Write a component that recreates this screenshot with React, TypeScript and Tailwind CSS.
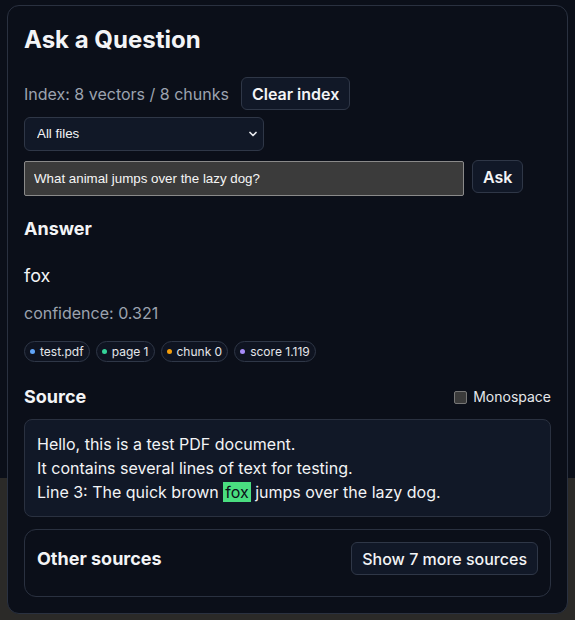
import { ChevronDown } from 'lucide-react';

const chips = [
  { label: 'test.pdf', dot: 'bg-[#60a5fa]' },
  { label: 'page 1', dot: 'bg-[#34d399]' },
  { label: 'chunk 0', dot: 'bg-[#f59e0b]' },
  { label: 'score 1.119', dot: 'bg-[#a78bfa]' },
];

export default function App() {
  return (
    <div className="min-h-screen bg-[linear-gradient(#0b0f19_478px,#2b2a28_478px)] pl-[7px] pt-[5px] font-['Inter',sans-serif] text-[#e5e7eb]">
      <div className="w-[561px] rounded-xl border border-[#2a3140] bg-[#0b0f19] p-4">
        <h1 className="pt-[2px] text-2xl font-bold leading-8 text-[#f3f4f6]">Ask a Question</h1>

        {/* index status */}
        <div className="mt-[21px] flex items-center gap-3">
          <span className="text-base text-[#9ca3af]">Index: 8 vectors / 8 chunks</span>
          <button className="h-[33px] rounded-md border border-[#2f3747] bg-[#111827] px-[10px] text-base font-semibold text-[#f3f4f6]">
            Clear index
          </button>
        </div>

        <div className="relative mt-[7px] w-[240px]">
          <select className="h-[34px] w-full appearance-none rounded-md border border-[#2f3747] bg-[#111827] pl-3 font-['Liberation_Sans',Arial,sans-serif] text-[13.33px] text-[#f3f4f6]">
            <option>All files</option>
          </select>
          <ChevronDown className="pointer-events-none absolute right-[5px] top-[11px] h-3 w-3 text-[#e5e7eb]" strokeWidth={3.5} />
        </div>

        <div className="mt-[10px] flex items-start gap-2">
          <input
            className="h-[35px] w-[440px] rounded-[2px] border border-[#8a8a8a] bg-[#3b3b3b] px-[9px] font-['Liberation_Sans',Arial,sans-serif] text-[13.33px] text-[#f5f5f5] outline-none"
            defaultValue="What animal jumps over the lazy dog?"
          />
          <button className="mt-[-1px] h-[33px] rounded-md border border-[#2f3747] bg-[#111827] px-[10px] text-base font-semibold text-[#f3f4f6]">
            Ask
          </button>
        </div>

        {/* answer */}
        <h2 className="mt-[19px] text-lg font-bold leading-7 text-[#f3f4f6]">Answer</h2>
        <p className="mt-[19px] text-lg leading-7 text-[#f3f4f6]">fox</p>
        <p className="mt-[11px] text-base text-[#9ca3af]">confidence: 0.321</p>
        <div className="mt-[16px] flex gap-[6px]">
          {chips.map((c) => (
            <span
              key={c.label}
              className="flex h-[21px] items-center gap-[5px] rounded-full border border-[#2f3747] bg-[#0f1421] px-[5px] text-xs text-[#e5e7eb]"
            >
              <span className={`h-[5px] w-[5px] rounded-full ${c.dot}`} />
              {c.label}
            </span>
          ))}
        </div>

        {/* source */}
        <div className="mt-[21px] flex items-center justify-between">
          <h2 className="text-lg font-bold leading-7 text-[#f3f4f6]">Source</h2>
          <label className="flex items-center gap-[6px] text-sm text-[#e5e7eb]">
            <span className="h-[13px] w-[13px] rounded-[2px] border border-[#767676] bg-[#3b3b3b]" />
            Monospace
          </label>
        </div>
        <div className="mt-[8px] rounded-lg border border-[#2a3140] bg-[#111827] p-3 text-base leading-6 text-[#f3f4f6]">
          <p>Hello, this is a test PDF document.</p>
          <p>It contains several lines of text for testing.</p>
          <p>
            Line 3: The quick brown <mark className="bg-[#4ade80] px-[2px] text-[#0b0f19]">fox</mark> jumps over the lazy dog.
          </p>
        </div>

        <div className="mt-3 rounded-xl border border-[#2a3140] px-3 pb-[21px] pt-3">
          <div className="flex items-center justify-between">
            <h3 className="text-lg font-bold text-[#f3f4f6]">Other sources</h3>
            <button className="h-[33px] rounded-md border border-[#2f3747] bg-[#111827] px-[10px] text-base font-medium text-[#f3f4f6]">
              Show 7 more sources
            </button>
          </div>
        </div>
      </div>
    </div>
  );
}
